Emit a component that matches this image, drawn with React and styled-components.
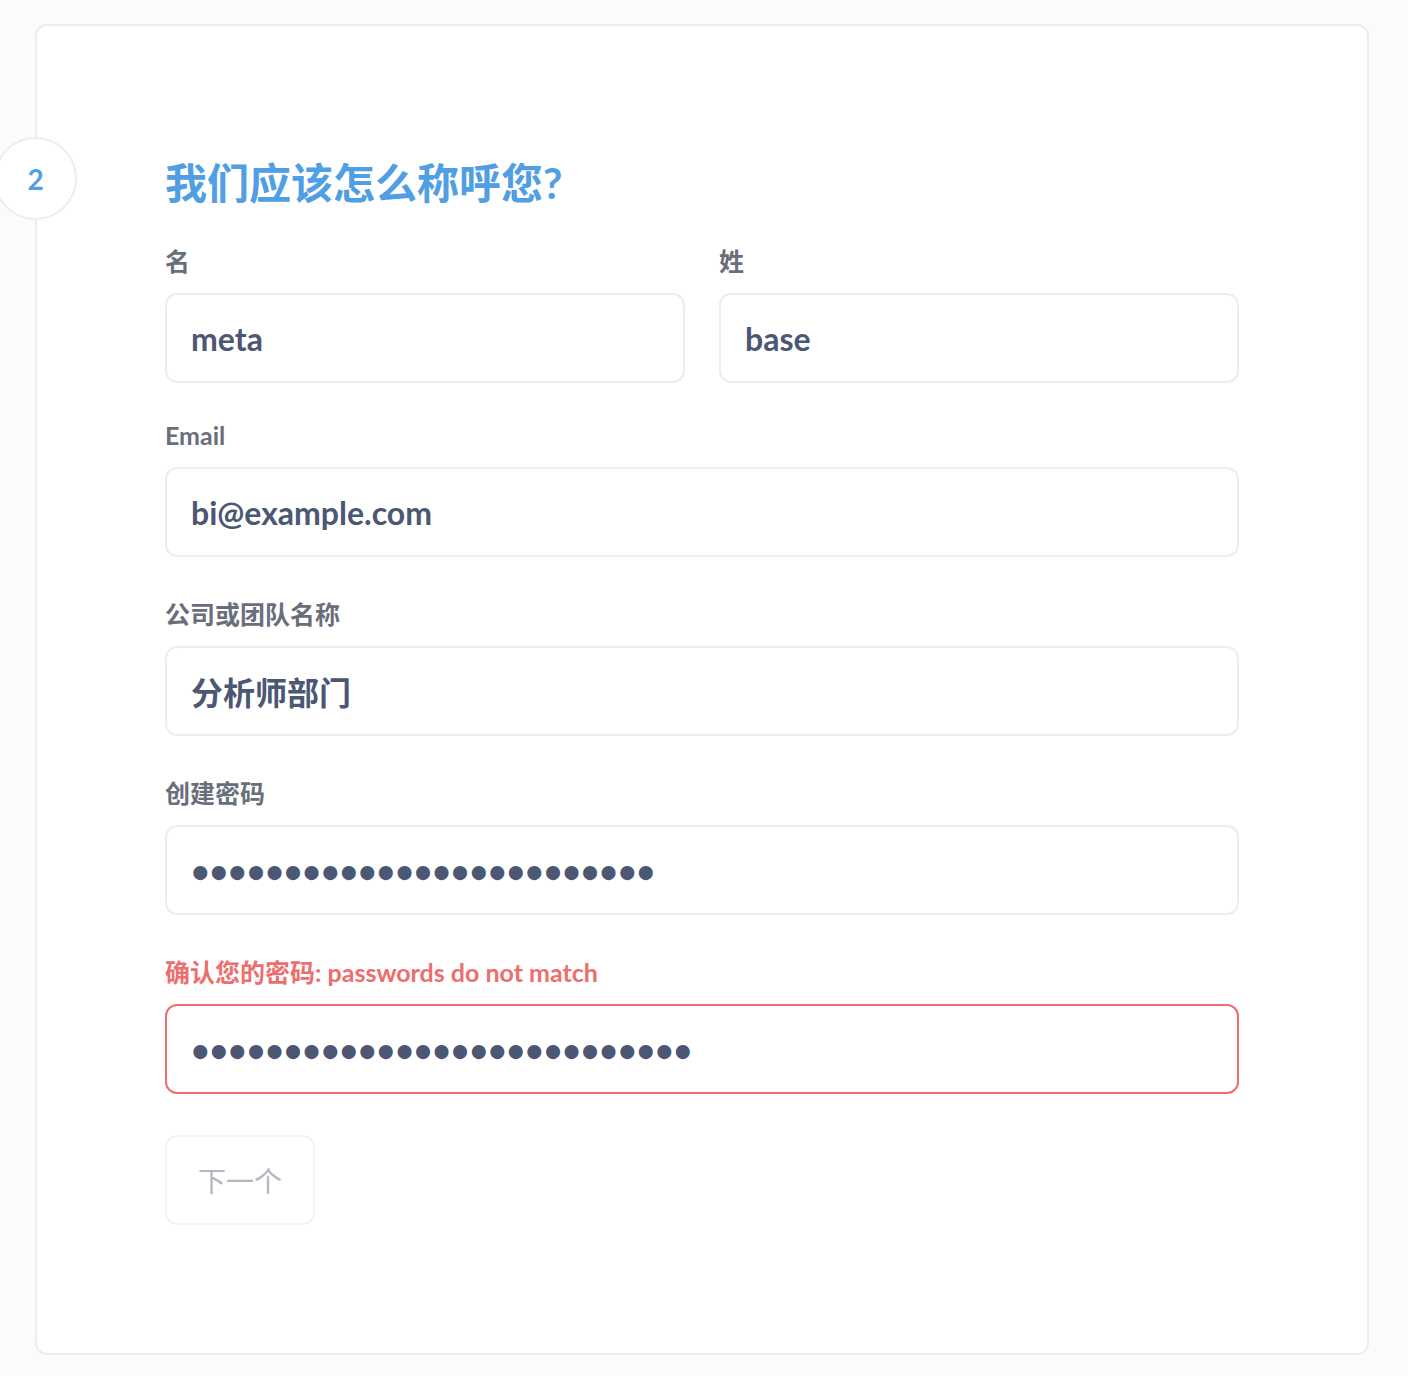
import React from 'react';
import styled, { createGlobalStyle } from 'styled-components';

const GlobalStyle = createGlobalStyle`
  * { box-sizing: border-box; }
  body {
    margin: 0;
    background: #f9fbfc;
    font-family: Lato, "Noto Sans CJK SC", sans-serif;
  }
`;

const Page = styled.div`
  padding: 24px 39px 21px 35px;
`;

const Card = styled.section`
  position: relative;
  background: #fff;
  border: 2px solid #eeecec;
  border-radius: 12px;
  padding: 129px 128px 128px;
`;

const StepBadge = styled.div`
  position: absolute;
  left: -43px;
  top: 111px;
  width: 83px;
  height: 83px;
  border-radius: 50%;
  border: 2px solid #eeecec;
  background: #fff;
  display: flex;
  align-items: center;
  justify-content: center;
  color: #509ee3;
  font-size: 28px;
  font-weight: 700;
`;

const Title = styled.h2`
  margin: 0 0 34px;
  font-size: 42px;
  line-height: 56px;
  font-weight: 700;
  color: #509ee3;
`;

const Row = styled.div`
  display: grid;
  grid-template-columns: 1fr 1fr;
  gap: 34px;
  margin-bottom: ${p => p.$gap}px;
`;

const Field = styled.div`
  display: flex;
  flex-direction: column;
  margin-bottom: ${p => p.$gap || 0}px;
`;

const Label = styled.label`
  font-size: 25px;
  line-height: 32px;
  font-weight: 700;
  color: ${p => (p.$error ? '#ed6e6e' : '#696e7b')};
  margin-bottom: 16px;
`;

const Input = styled.input`
  height: 90px;
  width: 100%;
  padding: 0 24px;
  border: 2px solid ${p => (p.$error ? '#ed6e6e' : '#eeecec')};
  border-radius: 12px;
  background: #fff;
  font-family: Lato, "Noto Sans CJK SC", sans-serif;
  font-size: 32px;
  font-weight: 700;
  color: #4c5773;
  outline: none;
`;

const NextButton = styled.button`
  width: 150px;
  height: 90px;
  border: 2px solid #f3f3f3;
  border-radius: 12px;
  background: #fff;
  font-family: Lato, "Noto Sans CJK SC", sans-serif;
  font-size: 28px;
  color: #b3b7c0;
  padding: 0;
`;

export default function App() {
  return (
    <Page>
      <GlobalStyle />
      <Card>
        <StepBadge>2</StepBadge>
        <Title>我们应该怎么称呼您?</Title>
        <Row $gap={36}>
          <Field>
            <Label>名</Label>
            <Input defaultValue="meta" />
          </Field>
          <Field>
            <Label>姓</Label>
            <Input defaultValue="base" />
          </Field>
        </Row>
        <Field $gap={41}>
          <Label>Email</Label>
          <Input defaultValue="bi@example.com" />
        </Field>
        <Field $gap={41}>
          <Label>公司或团队名称</Label>
          <Input defaultValue="分析师部门" />
        </Field>
        <Field $gap={41}>
          <Label>创建密码</Label>
          <Input type="password" defaultValue={'x'.repeat(25)} />
        </Field>
        <Field $gap={41}>
          <Label $error>确认您的密码: passwords do not match</Label>
          <Input type="password" $error defaultValue={'x'.repeat(27)} />
        </Field>
        <NextButton disabled>下一个</NextButton>
      </Card>
    </Page>
  );
}
